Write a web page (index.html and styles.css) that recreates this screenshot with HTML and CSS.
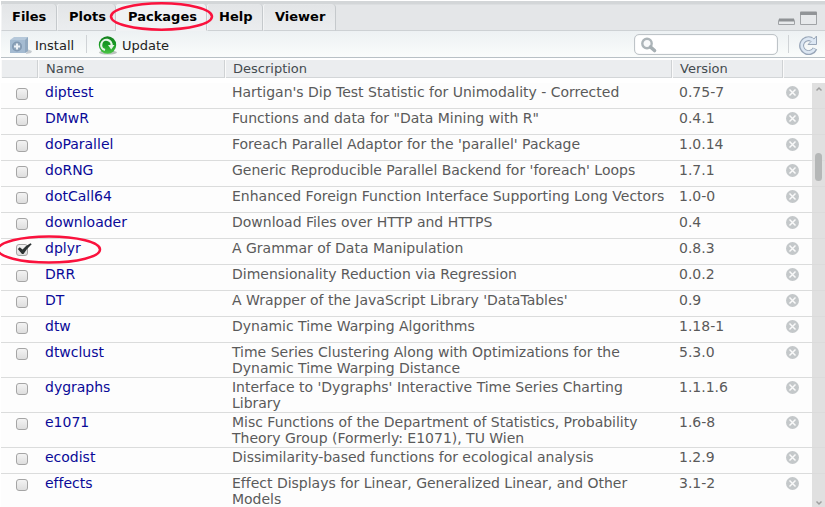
FILE: index.html
```html
<!DOCTYPE html>
<html lang="en">
<head>
<meta charset="utf-8">
<title>Packages</title>
<link rel="stylesheet" href="styles.css">
</head>
<body>
<main class="pane">
  <nav class="tabs">
    <div class="tab files">Files</div>
    <div class="tab plots">Plots</div>
    <div class="tab packages active">Packages</div>
    <div class="tab help">Help</div>
    <div class="tab viewer">Viewer</div>
    <svg class="window-controls" width="42" height="16" viewBox="0 0 42 16">
      <path d="M2.500 13.500v-4q0-1 1-1h14q1 0 1 1v4z" fill="#e7e9eb" stroke="#a0a3a6"/>
      <path d="M3 9h15" stroke="#8f9295" stroke-width="3"/>
      <path d="M24.500 2.500h16v11h-16z" fill="#e7e9eb" stroke="#a0a3a6"/>
      <path d="M24 4v-2.500q0-1 1-1h15q1 0 1 1v2.500z" fill="#919497"/>
    </svg>
  </nav>
  <div class="toolbar">
    <svg class="install-icon" width="24" height="20" viewBox="0 0 24 20">
      <path d="M18 13l5 2-1 2-5 1z" fill="#c5cbd0"/>
      <path d="M1 4l4-3h14v14l-3 2z" fill="#b5c8da"/>
      <path d="M16 4l3-3v14l-3 2z" fill="#91a9c0"/>
      <path d="M1 4h15v13H1z" fill="#a4bbd1"/>
      <circle cx="8" cy="10.500" r="5" fill="#8098b1"/>
      <circle cx="8" cy="10.500" r="3.700" fill="#91a6bb"/>
      <path d="M8 7.500v6M5 10.500h6" stroke="#edf2f7" stroke-width="2"/>
    </svg>
    <span class="install-label">Install</span>
    <i class="divider first"></i>
    <svg class="update-icon" width="20" height="20" viewBox="0 0 20 20">
      <defs><linearGradient id="g" x1="0" y1="0" x2="0" y2="1"><stop offset="0" stop-color="#14811f"/><stop offset=".5" stop-color="#199c24"/><stop offset="1" stop-color="#4cc746"/></linearGradient></defs>
      <ellipse cx="10" cy="16.500" rx="9" ry="2" fill="#b9c2bd"/>
      <circle cx="9.500" cy="9" r="8.700" fill="url(#g)"/>
      <path d="M7 14A5.200 5.200 0 1 1 13.500 10" fill="none" stroke="#e8f5e8" stroke-width="2.200"/>
      <path d="M10 9h6.500l-3.300 4.500z" fill="#e8f5e8"/>
    </svg>
    <span class="update-label">Update</span>
    <div class="search">
      <svg width="18" height="18" viewBox="0 0 18 18">
        <circle cx="7" cy="6.500" r="4.700" fill="#f8f9fa" stroke="#adb5b9" stroke-width="2.400"/>
        <path d="M10.500 10l4 3.500" stroke="#a6afb3" stroke-width="3.600" stroke-linecap="round"/>
      </svg>
    </div>
    <i class="divider second"></i>
    <svg class="refresh-icon" width="20" height="20" viewBox="0 0 20 20">
      <path d="M13.500 4.300A7 7 0 1 0 17 13.500" fill="none" stroke="#98a6b8" stroke-width="5"/>
      <path d="M18.500 1v8.500H10l3-3-1.500-1.500 3-2 1.500 1z" fill="#dce7f3" stroke="#98a6b8"/>
      <path d="M14.500 5A6.800 6.800 0 1 0 16.500 13.800" fill="none" stroke="#dce7f3" stroke-width="2.800"/>
    </svg>
  </div>
  <div class="header grid"><span></span><span>Name</span><span>Description</span><span>Version</span><span></span></div>
  <div class="body">
    <div class="rows" id="rows"></div>
    <div class="scrollbar">
      <svg class="arrow-up" width="8" height="6" viewBox="0 0 8 6"><path d="M1.500 4.500L4 2l2.500 2.500" fill="none" stroke="#a0a0a0" stroke-width="1.500"/></svg>
      <div class="thumb"></div>
      <svg class="arrow-down" width="8" height="6" viewBox="0 0 8 6"><path d="M1.500 1.500L4 4l2.500-2.500" fill="none" stroke="#a0a0a0" stroke-width="1.500"/></svg>
    </div>
  </div>
  <svg class="marks" width="825" height="507" viewBox="0 0 825 507" fill="none" stroke="#fa123d" stroke-width="2.500">
    <ellipse cx="161.500" cy="16.500" rx="50.500" ry="13.200"/>
    <ellipse cx="49" cy="249.500" rx="51" ry="13"/>
  </svg>
</main>
<script src="packages.js"></script>
</body>
</html>
```
FILE: styles.css
```css
* { box-sizing: border-box; }
body { margin: 0; font-family: "DejaVu Sans", sans-serif; background: #fff; }
svg { display: block; flex: none; }
.pane { position: relative; width: 825px; height: 507px; overflow: hidden; padding-left: 1px; }
.tabs { height: 31px; display: flex; align-items: flex-end; border-top: 1px solid #fff; background: linear-gradient(#d3d6d8 0, #d3d6d8 3px, #e4e6e8 4px); box-shadow: inset 0 -1px #cdd1d4; }
.tab { height: 27px; font: bold 13px/25px "DejaVu Sans", sans-serif; color: #000; background: linear-gradient(#e3e5e7, #ebedef); border-right: 1px solid #c5c9cc; border-bottom: 1px solid #cdd1d4; border-left: 1px solid #f3f4f5; border-radius: 3px 4px 0 0; flex: none; }
.files { width: 56px; padding-left: 10px; }
.plots { width: 59px; padding-left: 11px; }
.packages { width: 91px; padding-left: 11px; }
.help { width: 56px; padding-left: 11px; }
.viewer { width: 73px; padding-left: 11px; }
.active { background: #f0f2f4; border-bottom-color: #f0f2f4; }
.window-controls { margin: 0 7px 4px auto; }
.toolbar { height: 27px; display: flex; align-items: center; background: linear-gradient(#edf1f3, #fafcfb); border-bottom: 1px solid #b8c0c5; font-size: 13px; color: #222; }
.install-icon { margin: 3px 0 0 8px; }
.install-label { margin-left: 2px; width: 51px; margin-top: 2px; }
.divider { width: 1px; height: 18px; background: #cfd3d6; flex: none; }
.update-icon { margin: 3px 0 0 11px; }
.update-label { margin-left: 4px; margin-top: 2px; }
.search { width: 144px; height: 21px; margin-left: auto; margin-right: 10px; border: 1px solid #bec4c8; border-radius: 5px; background: #fff; box-shadow: inset 0 0 1px #bec4c8; padding: 2px 0 0 5px; }
.refresh-icon { margin: 1px 7px 0 9px; }
.grid { display: grid; grid-template-columns: 37px 188px 446px 111px 1fr; }
.header { margin-top: 2px; height: 18px; background: #ebedef; border-bottom: 1px solid #d3d6d8; color: #444b50; font-size: 13px; line-height: 18px; grid-template-columns: 37px 187px 447px 111px 1fr; }
.header span { padding-left: 7px; border-right: 1px solid #cfd2d4; border-left: 1px solid #fafafa; }
.header span:last-child { border-right: 0; }
.body { margin-top: 5px; position: relative; background: #fdfdfd; height: 424px; }
.row { border-bottom: 1px solid #dbdcdc; min-height: 26px; padding-bottom: 1px; font-size: 14px; line-height: 16px; letter-spacing: -0.01px; color: #5a5a5a; }
.row > div { padding-top: 1px; padding-left: 6px; white-space: nowrap; }
.row > .pkg { color: #0a0a98; padding-left: 7px; }
.row > .ver { padding-left: 7px; }
.row > .check { padding: 5px 0 0 15px; }
.row > .remove { padding: 3px 0 0 3px; }
.box { width: 12px; height: 12px; border: 1px solid #a5a5a5; border-radius: 3px; background: linear-gradient(#f3f3f3, #dedede); position: relative; }
.box svg { position: absolute; left: 0; top: -2px; }
.scrollbar { position: absolute; right: 0; top: 0; width: 13px; height: 424px; background: rgba(218, 218, 218, .85); display: flex; flex-direction: column; }
.arrow-up { margin: 3px 0 0 3px; }
.thumb { width: 7px; height: 28px; margin: 61px 0 0 3px; border-radius: 4px; background: #b5b7b7; }
.arrow-down { margin: auto 0 1px 3px; }
.marks { position: absolute; left: 0; top: 0; pointer-events: none; }
```
FILE: packages.js
```js
const packages = [
  ["diptest", "Hartigan's Dip Test Statistic for Unimodality - Corrected", "0.75-7"],
  ["DMwR", "Functions and data for \"Data Mining with R\"", "0.4.1"],
  ["doParallel", "Foreach Parallel Adaptor for the 'parallel' Package", "1.0.14"],
  ["doRNG", "Generic Reproducible Parallel Backend for 'foreach' Loops", "1.7.1"],
  ["dotCall64", "Enhanced Foreign Function Interface Supporting Long Vectors", "1.0-0"],
  ["downloader", "Download Files over HTTP and HTTPS", "0.4"],
  ["dplyr", "A Grammar of Data Manipulation", "0.8.3", true],
  ["DRR", "Dimensionality Reduction via Regression", "0.0.2"],
  ["DT", "A Wrapper of the JavaScript Library 'DataTables'", "0.9"],
  ["dtw", "Dynamic Time Warping Algorithms", "1.18-1"],
  ["dtwclust", "Time Series Clustering Along with Optimizations for the<br>Dynamic Time Warping Distance", "5.3.0"],
  ["dygraphs", "Interface to 'Dygraphs' Interactive Time Series Charting<br>Library", "1.1.1.6"],
  ["e1071", "Misc Functions of the Department of Statistics, Probability<br>Theory Group (Formerly: E1071), TU Wien", "1.6-8"],
  ["ecodist", "Dissimilarity-based functions for ecological analysis", "1.2.9"],
  ["effects", "Effect Displays for Linear, Generalized Linear, and Other<br>Models", "3.1-2"]
];
const tick = '<svg width="16" height="12" viewBox="0 0 16 12"><path d="M.8 6l2-1.800 2.700 2.300Q9 2.500 13.500.3l1.200 1Q10 5.500 6.500 11H5z" fill="#2c3333"/></svg>';
const cross = '<svg width="13" height="13" viewBox="0 0 13 13"><circle cx="6.500" cy="6.500" r="6.500" fill="#c4c8ca"/><path d="M3.500 3.500l6 6m0-6l-6 6" stroke="#fafafa" stroke-width="1.500"/></svg>';
document.getElementById("rows").innerHTML = packages.map(([name, desc, version, loaded]) =>
  `<div class="row grid"><div class="check"><div class="box">${loaded ? tick : ""}</div></div><div class="pkg">${name}</div><div>${desc}</div><div class="ver">${version}</div><div class="remove">${cross}</div></div>`
).join("");
```
